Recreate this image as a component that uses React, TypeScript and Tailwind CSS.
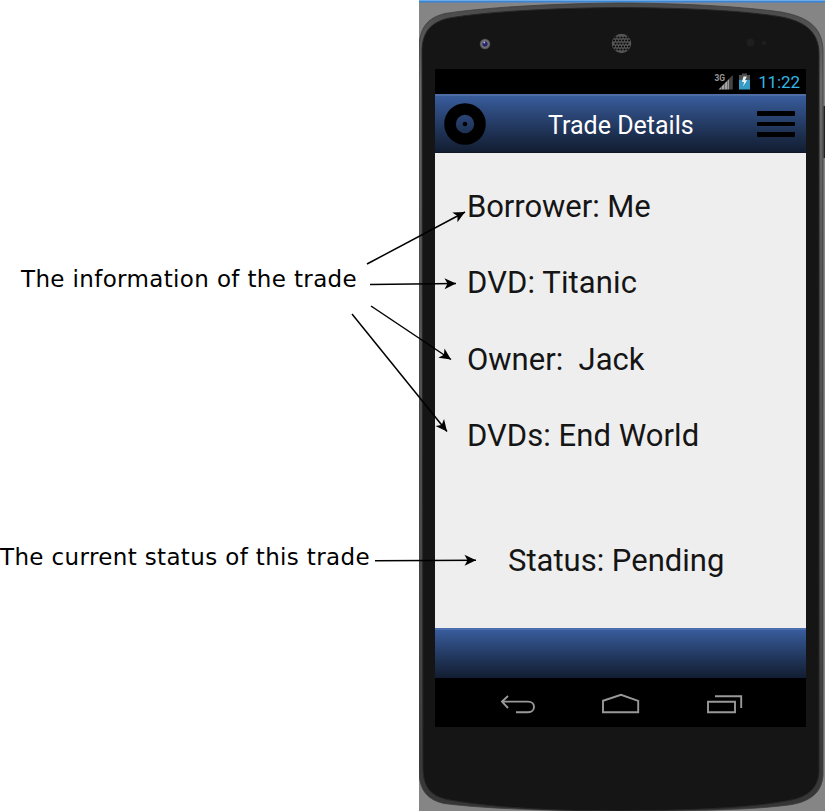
import React from "react";

const OUTER =
  "M0 50 C0 28 8 18 26 13.5 C60 8 130 3.5 202 3 C275 3.5 325 7 362 12 C390 17 404 28 404 52 V775 C403 792 392 801 373 804.5 C340 809 300 811 202 811 C120 811 60 808 25 803.5 C10 800 0 792 0 770 Z";
const INNER =
  "M3 52 C3 33 11 23 28 18.5 C62 12 130 8 202 7.5 C275 8 325 11 360 16.5 C386 21 400 32 400 54 V772 C399 788 389 797 370 800.5 C340 806 300 810 202 811 C120 811 62 806 28 799.5 C13 796 4 788 4 768 Z";

const details = [
  { text: "Borrower: Me", tracking: "tracking-[-0.06px]" },
  { text: "DVD: Titanic", tracking: "tracking-[0.12px]" },
  { text: "Owner:  Jack", tracking: "tracking-[0px]" },
  { text: "DVDs: End World", tracking: "tracking-[0.05px]" },
];

const arrows: [number, number, number, number][] = [
  [367, 264, 465, 212],
  [370, 284.5, 456, 283.5],
  [371, 306, 451, 359.5],
  [352, 314, 447, 431.5],
  [375, 560.8, 476, 560.2],
];

function PhoneBody() {
  const holes: [number, number][] = [];
  for (let y = -9; y <= 9; y += 3)
    for (let x = -9; x <= 9; x += 3) {
      const px = x + (Math.abs(y / 3) % 2 ? 1.5 : 0);
      if (px * px + y * y < 76) holes.push([202.5 + px, 43.5 + y]);
    }
  return (
    <svg className="absolute inset-0" width="406" height="811" viewBox="0 0 406 811">
      <defs>
        <linearGradient id="rim" x1="0" y1="0" x2="0" y2="1">
          <stop offset="0" stopColor="#484848" />
          <stop offset="0.1" stopColor="#6a6a6c" />
          <stop offset="0.3" stopColor="#59595b" />
          <stop offset="0.8" stopColor="#454545" />
          <stop offset="1" stopColor="#353535" />
        </linearGradient>
        <radialGradient id="lens">
          <stop offset="0" stopColor="#22208a" />
          <stop offset="0.4" stopColor="#292752" />
          <stop offset="0.6" stopColor="#77777f" />
          <stop offset="1" stopColor="#48484a" />
        </radialGradient>
      </defs>
      <rect width="406" height="811" fill="#858585" />
      <rect width="406" height="1.5" y="1" fill="#3686d8" />
      <rect width="406" height="1" fill="#72a9e3" />
      <path d={OUTER} fill="url(#rim)" stroke="#3c3c3c" strokeWidth="0.8" />
      <path d={INNER} fill="#151515" stroke="#262626" strokeWidth="1" />
      <rect x="404.5" y="106" width="1.5" height="52" fill="#222" />
      <circle cx="66" cy="44" r="5.3" fill="url(#lens)" />
      <circle cx="65.3" cy="42.6" r="1" fill="#a9a9e5" />
      <circle cx="202.5" cy="43.5" r="9.7" fill="#555" />
      {holes.map(([x, y], i) => (
        <circle key={i} cx={x} cy={y} r="1.1" fill="#101010" />
      ))}
      <circle cx="331.5" cy="42.5" r="4" fill="#1e1e1e" />
      <circle cx="345" cy="43" r="2.3" fill="#1e1e1e" />
    </svg>
  );
}

function StatusBar() {
  return (
    <div className="flex h-[25px] items-center justify-end bg-black pr-[6px]">
      <svg width="38" height="25" viewBox="0 0 38 25">
        <text x="0.5" y="11.5" fontSize="9" fontWeight="700" fill="#999" fontFamily="Roboto, sans-serif" textLength="10.5" lengthAdjust="spacingAndGlyphs">3G</text>
        <path d="M4.5 20.5 L15 10 V20.5Z" fill="#a5a5a5" />
        <path d="M15 9.7 L18.8 6 V20.5 H15Z" fill="#444" />
        <path d="M7.5 17V21M10.6 14V21M13.7 11V21" stroke="#333" strokeWidth=".6" />
        <path d="M25 6 H28 V4.5 H33 V6 H36 V10.5 H25Z" fill="#505050" />
        <path d="M25 10.5 H36 V20.5 H25Z" fill="#359bc5" />
        <path d="M29.5 7.5 L28 13 H30.2 L29 17.5 L33.2 11.3 H31 L32.8 7.5Z" fill="#f5f5f5" />
      </svg>
      <span className="ml-[6px] pt-px text-[17px] leading-[24px] tracking-[-0.1px] text-[#33b5e5]">11:22</span>
    </div>
  );
}

function Header() {
  return (
    <header className="flex h-[59px] items-center border-t-2 border-b border-t-[#4e6da5] border-b-[#0e1624] bg-linear-to-b from-[#385c9c] to-[#121d31] pr-[11px] pl-[9px]">
      <svg width="42" height="42" viewBox="0 0 42 42">
        <circle cx="21" cy="21" r="15" fill="none" stroke="#000" strokeWidth="11.6" />
        <circle cx="21" cy="21" r="2.3" />
      </svg>
      <h1 className="ml-[62px] whitespace-nowrap pt-[4px] text-[25px] leading-[52px] text-white">Trade Details</h1>
      <div className="ml-auto flex flex-col gap-[6px]">
        <i className="block h-[4.4px] w-[38px] rounded-[1px] bg-black" />
        <i className="block h-[4.4px] w-[38px] rounded-[1px] bg-black" />
        <i className="block h-[4.4px] w-[38px] rounded-[1px] bg-black" />
      </div>
    </header>
  );
}

function NavBar() {
  return (
    <nav className="h-[49px] bg-black">
      <svg width="371" height="49" viewBox="0 0 371 49" fill="none" stroke="#999" strokeWidth="1.9">
        <path d="M66.5 23.6H93C101 23.6 101 34.2 93 34.2H81M73 18L67 23.6L73 30" />
        <path d="M168 34.2V22.8L186 16.8L203.2 22.8V34.2Z" />
        <path d="M273 23.7H300V34.2H273ZM280 18.2H306.2V30" />
      </svg>
    </nav>
  );
}

export default function App() {
  return (
    <main className="relative flex h-[812px] w-[826px] overflow-hidden bg-white">
      <section className="flex w-[419px] shrink-0 flex-col pt-[263px] font-['DejaVu_Sans',sans-serif] text-[23px] leading-[32px] tracking-[0.36px] text-black">
        <p className="ml-[21px] whitespace-nowrap">The information of the trade</p>
        <p className="mt-[246px] whitespace-nowrap">The current status of this trade</p>
      </section>
      <section className="relative h-[811px] w-[406px] shrink-0 pt-[69px] pl-[16px] font-[Roboto,sans-serif]">
        <PhoneBody />
        <div className="relative flex w-[371px] flex-col">
          <StatusBar />
          <Header />
          <div className="flex h-[475px] flex-col bg-[#eee] pt-[16px] text-[31px] leading-[76.4px] text-[#151515]">
            {details.map((d) => (
              <p key={d.text} className={"ml-[32px] h-[76.4px] whitespace-pre " + d.tracking}>{d.text}</p>
            ))}
            <p className="mt-[48px] ml-[73px] h-[76px] whitespace-pre">Status: Pending</p>
          </div>
          <div className="h-[50px] border-t-2 border-[#4a6eae] bg-linear-to-b from-[#385c9c] to-[#121d31]" />
          <NavBar />
        </div>
      </section>
      <svg className="pointer-events-none absolute inset-0" width="826" height="812" viewBox="0 0 826 812">
        <defs>
          <marker id="tip" markerUnits="userSpaceOnUse" markerWidth="14" markerHeight="14" refX="12" refY="6" orient="auto">
            <path d="M0.5 0.5L12 6L0.5 11.5L3.5 6Z" fill="#000" />
          </marker>
        </defs>
        {arrows.map(([a, b, c, d]) => (
          <line key={b} x1={a} y1={b} x2={c} y2={d} stroke="#000" strokeWidth="1.5" markerEnd="url(#tip)" />
        ))}
      </svg>
    </main>
  );
}
